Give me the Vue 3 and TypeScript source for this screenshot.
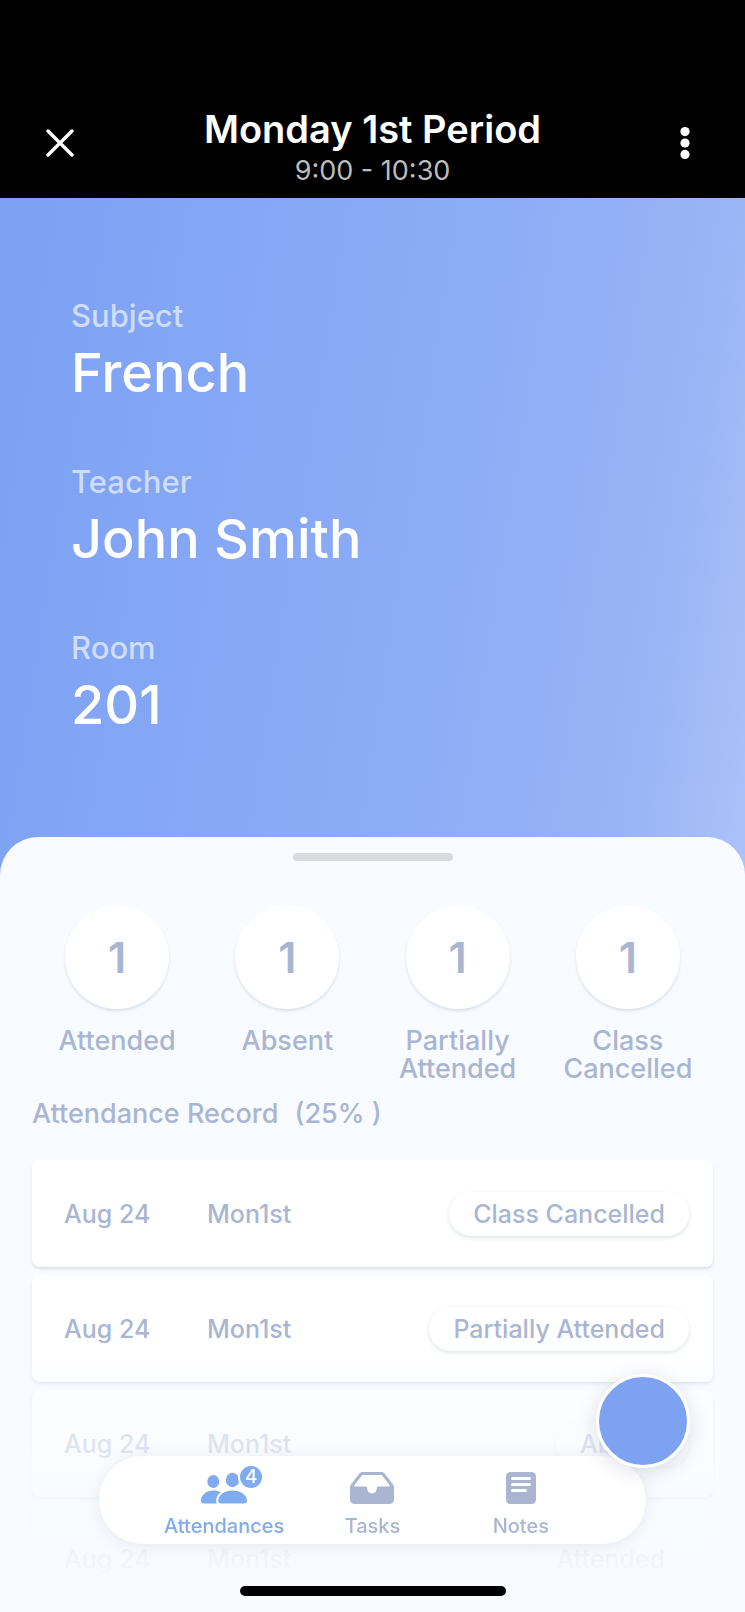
<script setup lang="ts">
interface Detail { label: string; value: string }
interface Stat { label: string; count: number }
interface AttendanceRecord { id: number; date: string; period: string; status: string }

const details: Detail[] = [
  { label: 'Subject', value: 'French' },
  { label: 'Teacher', value: 'John Smith' },
  { label: 'Room', value: '201' },
]

const stats: Stat[] = [
  { label: 'Attended', count: 1 },
  { label: 'Absent', count: 1 },
  { label: 'Partially Attended', count: 1 },
  { label: 'Class Cancelled', count: 1 },
]

const records: AttendanceRecord[] = [
  { id: 1, date: 'Aug 24', period: 'Mon1st', status: 'Class Cancelled' },
  { id: 2, date: 'Aug 24', period: 'Mon1st', status: 'Partially Attended' },
  { id: 3, date: 'Aug 24', period: 'Mon1st', status: 'Absent' },
  { id: 4, date: 'Aug 24', period: 'Mon1st', status: 'Attended' },
]
</script>

<template>
  <div class="page">
    <header class="top">
      <button class="icon-button" type="button" aria-label="Close">
        <svg width="28" height="28" viewBox="0 0 28 28" fill="none" stroke="#fff" stroke-width="3.4" stroke-linecap="round">
          <path d="M2 2 26 26M26 2 2 26" />
        </svg>
      </button>
      <div class="heading">
        <h1>Monday 1st Period</h1>
        <p>9:00 - 10:30</p>
      </div>
      <button class="icon-button" type="button" aria-label="More options">
        <svg width="10" height="32" viewBox="0 0 10 32" fill="#fff">
          <circle cx="5" cy="4.6" r="4.6" />
          <circle cx="5" cy="16" r="4.6" />
          <circle cx="5" cy="27.4" r="4.6" />
        </svg>
      </button>
    </header>

    <main class="body">
      <dl class="details">
        <div v-for="item in details" :key="item.label">
          <dt>{{ item.label }}</dt>
          <dd>{{ item.value }}</dd>
        </div>
      </dl>

      <section class="sheet">
        <div class="handle"></div>
        <ul class="stats">
          <li v-for="stat in stats" :key="stat.label">
            <span class="count">{{ stat.count }}</span>
            <span class="stat-label">{{ stat.label }}</span>
          </li>
        </ul>
        <h2><span>Attendance Record</span><span>(25% )</span></h2>
        <table class="records">
          <tbody>
            <tr v-for="record in records" :key="record.id">
              <td class="date">{{ record.date }}</td>
              <td class="period">{{ record.period }}</td>
              <td class="status"><span>{{ record.status }}</span></td>
            </tr>
          </tbody>
        </table>
      </section>
    </main>

    <div class="fade"></div>

    <nav class="tabs">
      <a class="tab active" href="#attendances">
        <span class="tab-icon">
          <svg width="46" height="32" viewBox="0 0 46 32" fill="currentColor">
            <ellipse cx="12.300" cy="9.500" rx="6" ry="6.500" />
            <path d="M0 28.500C0 22.500 6 18.500 12.500 18.500c2.800 0 5.200.6 7.200 1.800C16.700 22.500 15.200 25.500 15.200 29c0 .9.200 1.700.6 2.500H3C1 31.500 0 30.500 0 28.500Z" />
            <ellipse cx="31.500" cy="8" rx="6.700" ry="7.200" />
            <path d="M17.200 28.800C17.200 23 23.500 18.500 31.500 18.500S46 23 46 28.800c0 1.800-1 2.700-3 2.700H20.200c-2 0-3-.9-3-2.700Z" />
          </svg>
          <span class="badge">4</span>
        </span>
        Attendances
      </a>
      <a class="tab" href="#tasks">
        <span class="tab-icon">
          <svg width="44" height="32" viewBox="0 0 44 32" fill="currentColor">
            <path fill-rule="evenodd" d="M13 0H31c1.600 0 2.900.6 3.900 1.900L42.500 11.800C43.500 13 44 14.200 44 15.700V27c0 3.300-1.700 5-5 5H5c-3.300 0-5-1.700-5-5V15.700c0-1.500.5-2.700 1.500-3.900L9.100 1.900C10.100.6 11.400 0 13 0ZM13.600 2.900c-.9 0-1.600.4-2.200 1.100L4.600 13c-.6.800-.3 1.400.6 1.400H15.300c1.300 0 1.900.7 1.900 1.900 0 3 2.100 5.100 4.800 5.100s4.800-2.100 4.800-5.100c0-1.200.6-1.900 1.900-1.900H38.800c.9 0 1.200-.6.6-1.400L32.600 4c-.6-.7-1.300-1.100-2.200-1.100Z" />
          </svg>
        </span>
        Tasks
      </a>
      <a class="tab" href="#notes">
        <span class="tab-icon">
          <svg width="30" height="32" viewBox="0 0 30 32">
            <rect width="30" height="32" rx="4.500" fill="currentColor" />
            <path d="M6.500 6.500h17M6.500 12.500h17M6.500 18.500h13" stroke="#fff" stroke-width="3" stroke-linecap="round" />
          </svg>
        </span>
        Notes
      </a>
    </nav>
    <button class="fab" type="button" aria-label="Add"></button>
    <div class="home-indicator"></div>
  </div>
</template>

<style>
html,
body {
  margin: 0;
  background: #f8fbff;
}
</style>

<style scoped>
.page {
  position: relative;
  display: flex;
  flex-direction: column;
  min-height: 100vh;
  font-family: Inter, "Noto Sans CJK JP", sans-serif;
  color: #aab6d1;
}
.page *,
.page {
  box-sizing: border-box;
}
h1, h2, p, dl, dd, ul {
  margin: 0;
  padding: 0;
}
button {
  padding: 0;
  border: 0;
  background: none;
  cursor: pointer;
}
.top {
  display: flex;
  align-items: center;
  justify-content: space-between;
  padding: 88px 30px 0;
  height: 198px;
  background: #000;
}
.icon-button {
  display: grid;
  place-items: center;
  width: 60px;
  height: 60px;
}
.heading {
  padding-top: 12px;
  text-align: center;
}
h1 {
  font-size: 38px;
  line-height: 44px;
  font-weight: 600;
  color: #fff;
}
.heading p {
  font-size: 27px;
  line-height: 40px;
  color: #bcbcbc;
}
.body {
  flex: 1;
  display: flex;
  flex-direction: column;
  background: linear-gradient(99deg, #7da2f4 4%, #8eadf6 62%, #98b4f5 84%, #acc3f8 100%) top / 100% 700px no-repeat;
}
.details {
  display: flex;
  flex-direction: column;
  gap: 56px;
  padding: 97px 71px 100px;
}
.details dt {
  font-size: 31px;
  line-height: 42px;
  font-weight: 500;
  color: #cfdcfb;
}
.details dd {
  margin-top: 4px;
  font-size: 54px;
  line-height: 64px;
  font-weight: 500;
  color: #fff;
}
.sheet {
  flex: 1;
  padding: 16px 32px 0;
  border-radius: 38px 38px 0 0;
  background: #f8fbff;
}
.handle {
  width: 160px;
  height: 8px;
  margin: 0 auto 44px;
  border-radius: 4px;
  background: #d8dcdf;
}
.stats {
  display: grid;
  grid-template-columns: repeat(4, 1fr);
  list-style: none;
}
.stats li {
  display: flex;
  flex-direction: column;
  align-items: center;
  gap: 18px;
}
.count {
  display: grid;
  place-items: center;
  width: 104px;
  height: 104px;
  border-radius: 50%;
  background: #fff;
  box-shadow: 0 2px 3px rgba(120, 150, 160, 0.24);
  font-size: 43px;
  font-weight: 600;
}
.stat-label {
  max-width: 140px;
  font-size: 27px;
  line-height: 28px;
  font-weight: 500;
  text-align: center;
}
h2 {
  display: flex;
  gap: 16px;
  margin: 15px 0 30px;
  font-size: 27px;
  line-height: 32px;
  font-weight: 500;
}
.records {
  display: block;
}
.records tbody {
  display: grid;
  gap: 8px;
}
.records tr {
  display: flex;
  align-items: center;
  height: 107px;
  padding: 0 24px 0 32px;
  border-radius: 8px;
  background: #fff;
  box-shadow: 0 2px 3px rgba(120, 150, 160, 0.26);
  font-size: 25px;
  line-height: 44px;
  font-weight: 500;
}
.records td {
  padding: 0;
}
.date {
  width: 143px;
}
.status {
  margin-left: auto;
}
.status span {
  display: block;
  padding: 0 24px;
  border-radius: 22px;
  box-shadow: 0 2px 4px rgba(120, 150, 160, 0.24);
}
.fade {
  position: absolute;
  right: 0;
  bottom: 0;
  left: 0;
  height: 272px;
  background: linear-gradient(rgba(248, 251, 255, 0), rgba(248, 251, 255, 0.66) 36%, rgba(248, 251, 255, 0.88) 72%, #f8fbff);
  pointer-events: none;
}
.tabs {
  position: fixed;
  right: 99px;
  bottom: 68px;
  left: 99px;
  display: flex;
  justify-content: center;
  height: 88px;
  padding: 16px 51px 0;
  border-radius: 44px;
  background: #fff;
  box-shadow: 0 2px 16px rgba(60, 60, 90, 0.1);
}
.tab {
  display: flex;
  flex: 1;
  flex-direction: column;
  align-items: center;
  gap: 10px;
  font-size: 20px;
  line-height: 24px;
  font-weight: 500;
  color: #aab6d1;
  text-decoration: none;
}
.tab.active {
  color: #7facef;
}
.tab-icon {
  position: relative;
  height: 32px;
}
.tab-icon svg {
  display: block;
}
.badge {
  position: absolute;
  top: -8px;
  right: -17px;
  width: 26px;
  height: 26px;
  border: 2px solid #fff;
  border-radius: 50%;
  background: #7facef;
  color: #fff;
  font-size: 19px;
  line-height: 22px;
  font-weight: 500;
  text-align: center;
}
.fab {
  position: fixed;
  right: 55px;
  bottom: 144px;
  width: 94px;
  height: 94px;
  border: 3px solid #fff;
  border-radius: 50%;
  background: #7da2f2;
  box-shadow: 0 4px 20px rgba(70, 70, 120, 0.16);
}
.home-indicator {
  position: fixed;
  bottom: 16px;
  left: 50%;
  width: 266px;
  height: 10px;
  margin-left: -133px;
  border-radius: 5px;
  background: #000;
}
</style>
